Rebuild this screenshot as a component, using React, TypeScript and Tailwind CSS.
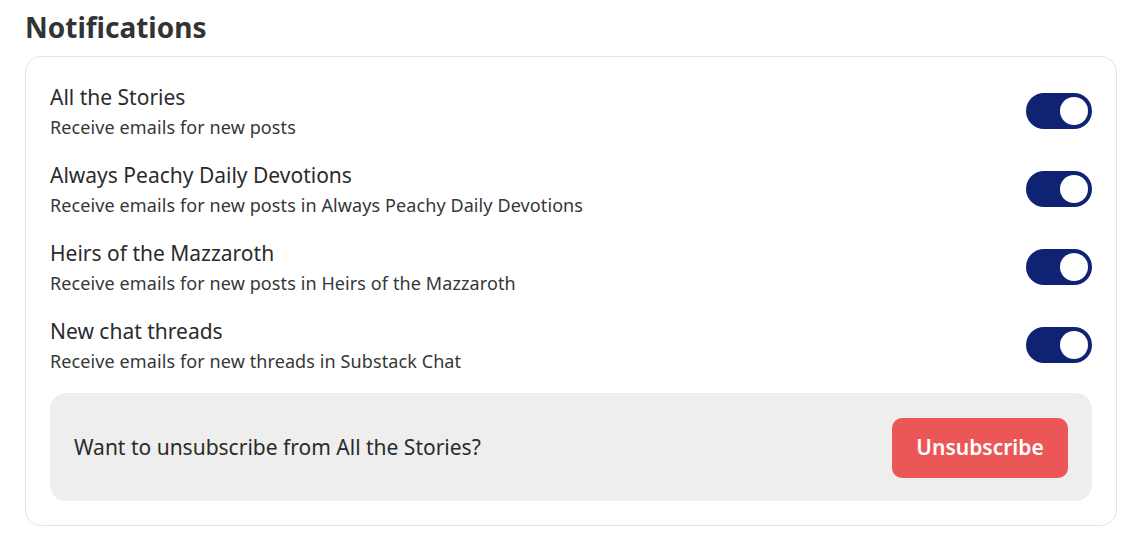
const rows = [
  { title: "All the Stories", desc: "Receive emails for new posts" },
  { title: "Always Peachy Daily Devotions", desc: "Receive emails for new posts in Always Peachy Daily Devotions" },
  { title: "Heirs of the Mazzaroth", desc: "Receive emails for new posts in Heirs of the Mazzaroth" },
  { title: "New chat threads", desc: "Receive emails for new threads in Substack Chat" },
]

const Toggle = () => (
  <button className="flex h-[36px] w-[66px] shrink-0 items-center justify-end rounded-full bg-[#0f2372] px-[4px]">
    <span className="h-[28px] w-[28px] rounded-full bg-white" />
  </button>
)

export default function App() {
  return (
    <div className="min-h-screen bg-white px-[25px] pt-[6px] font-['Noto_Sans',sans-serif] text-[#363737]">
      <h1 className="mb-[8px] text-[28px] font-bold leading-[42px] text-[#333]">Notifications</h1>
      <div className="w-[1092px] rounded-[16px] border border-[#e4e4e4] px-[24px] pb-[24px] pt-[26px]">
        <div className="flex flex-col gap-[22px]">
          {rows.map((r) => (
            <div key={r.title} className="flex items-center justify-between">
              <div>
                <div className="text-[21px] leading-[28px] text-[#2b2b2b]">{r.title}</div>
                <div className="mt-[4px] text-[18px] leading-[24px] tracking-[0.1px]">{r.desc}</div>
              </div>
              <Toggle />
            </div>
          ))}
        </div>
        <div className="mt-[20px] flex h-[108px] items-center justify-between rounded-[16px] bg-[#eeeeee] px-[24px] pt-[2px]">
          <span className="text-[21px] text-[#2b2b2b]">Want to unsubscribe from All the Stories?</span>
          <button className="h-[60px] w-[176px] rounded-[10px] bg-[#eb5757] text-[21px] font-semibold text-white">
            Unsubscribe
          </button>
        </div>
      </div>
    </div>
  )
}
